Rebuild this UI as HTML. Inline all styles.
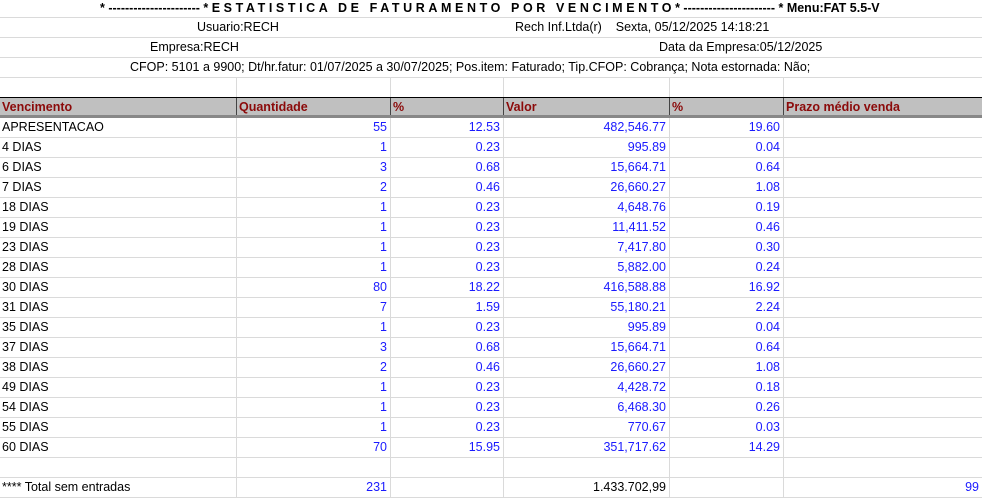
<!DOCTYPE html>
<html><head><meta charset="utf-8"><style>
*{margin:0;padding:0;box-sizing:border-box}
body{width:982px;height:498px;overflow:hidden;background:#fff;font-family:"Liberation Sans",Arial,sans-serif;font-size:12.5px;color:#000;position:relative}
.r{position:absolute;left:0;width:982px;height:20px;border-bottom:1px solid #dadada}
.t{position:absolute;top:0;line-height:19px;white-space:nowrap}
.c{position:absolute;top:0;height:19px;line-height:19px;white-space:nowrap;overflow:hidden;border-right:1px solid #dadada}
.c1{left:0;width:237px;padding-left:2px}
.c2{left:237px;width:154px;text-align:right;padding-right:3px}
.c3{left:391px;width:113px;text-align:right;padding-right:3px}
.c4{left:504px;width:166px;text-align:right;padding-right:3px}
.c5{left:670px;width:114px;text-align:right;padding-right:3px}
.c6{left:784px;width:198px;text-align:right;padding-right:3px;border-right:none}
.b{color:#1a1aff}
.h{background:#c0c0c0;border-top:1px solid #000;border-bottom:3px solid #888;height:21px}
.h .c{color:#8b0a0a;text-align:left;padding-left:2px;padding-right:0;font-weight:bold;height:17px;line-height:18px;border-right:1px solid #444}
.h .c6{border-right:none}
</style></head><body>
<div class="r" style="top:-2px"><div class="t" style="left:100px;top:1px;font-weight:bold">* ---------------------- * <span style="letter-spacing:3.6px">ESTATISTICA DE FATURAMENTO POR VENCIMENTO</span>* ---------------------- * Menu:FAT 5.5-V</div></div>
<div class="r" style="top:18px"><div class="t" style="left:197px">Usuario:RECH</div><div class="t" style="left:515px">Rech Inf.Ltda(r)&nbsp;&nbsp;&nbsp; Sexta, 05/12/2025 14:18:21</div></div>
<div class="r" style="top:38px"><div class="t" style="left:150px">Empresa:RECH</div><div class="t" style="left:659px">Data da Empresa:05/12/2025</div></div>
<div class="r" style="top:58px"><div class="t" style="left:130px">CFOP: 5101 a 9900; Dt/hr.fatur: 01/07/2025 a 30/07/2025; Pos.item: Faturado; Tip.CFOP: Cobrança; Nota estornada: Não;</div></div>
<div class="r" style="top:78px;border-bottom:none;height:19px"><div class="c c1"></div><div class="c c2"></div><div class="c c3"></div><div class="c c4"></div><div class="c c5"></div><div class="c c6"></div></div>
<div class="r h" style="top:97px"><div class="c c1">Vencimento</div><div class="c c2">Quantidade</div><div class="c c3">%</div><div class="c c4">Valor</div><div class="c c5">%</div><div class="c c6">Prazo médio venda</div></div>
<div class="r" style="top:118px"><div class="c c1">APRESENTACAO</div><div class="c c2 b">55</div><div class="c c3 b">12.53</div><div class="c c4 b">482,546.77</div><div class="c c5 b">19.60</div><div class="c c6"></div></div>
<div class="r" style="top:138px"><div class="c c1">4 DIAS</div><div class="c c2 b">1</div><div class="c c3 b">0.23</div><div class="c c4 b">995.89</div><div class="c c5 b">0.04</div><div class="c c6"></div></div>
<div class="r" style="top:158px"><div class="c c1">6 DIAS</div><div class="c c2 b">3</div><div class="c c3 b">0.68</div><div class="c c4 b">15,664.71</div><div class="c c5 b">0.64</div><div class="c c6"></div></div>
<div class="r" style="top:178px"><div class="c c1">7 DIAS</div><div class="c c2 b">2</div><div class="c c3 b">0.46</div><div class="c c4 b">26,660.27</div><div class="c c5 b">1.08</div><div class="c c6"></div></div>
<div class="r" style="top:198px"><div class="c c1">18 DIAS</div><div class="c c2 b">1</div><div class="c c3 b">0.23</div><div class="c c4 b">4,648.76</div><div class="c c5 b">0.19</div><div class="c c6"></div></div>
<div class="r" style="top:218px"><div class="c c1">19 DIAS</div><div class="c c2 b">1</div><div class="c c3 b">0.23</div><div class="c c4 b">11,411.52</div><div class="c c5 b">0.46</div><div class="c c6"></div></div>
<div class="r" style="top:238px"><div class="c c1">23 DIAS</div><div class="c c2 b">1</div><div class="c c3 b">0.23</div><div class="c c4 b">7,417.80</div><div class="c c5 b">0.30</div><div class="c c6"></div></div>
<div class="r" style="top:258px"><div class="c c1">28 DIAS</div><div class="c c2 b">1</div><div class="c c3 b">0.23</div><div class="c c4 b">5,882.00</div><div class="c c5 b">0.24</div><div class="c c6"></div></div>
<div class="r" style="top:278px"><div class="c c1">30 DIAS</div><div class="c c2 b">80</div><div class="c c3 b">18.22</div><div class="c c4 b">416,588.88</div><div class="c c5 b">16.92</div><div class="c c6"></div></div>
<div class="r" style="top:298px"><div class="c c1">31 DIAS</div><div class="c c2 b">7</div><div class="c c3 b">1.59</div><div class="c c4 b">55,180.21</div><div class="c c5 b">2.24</div><div class="c c6"></div></div>
<div class="r" style="top:318px"><div class="c c1">35 DIAS</div><div class="c c2 b">1</div><div class="c c3 b">0.23</div><div class="c c4 b">995.89</div><div class="c c5 b">0.04</div><div class="c c6"></div></div>
<div class="r" style="top:338px"><div class="c c1">37 DIAS</div><div class="c c2 b">3</div><div class="c c3 b">0.68</div><div class="c c4 b">15,664.71</div><div class="c c5 b">0.64</div><div class="c c6"></div></div>
<div class="r" style="top:358px"><div class="c c1">38 DIAS</div><div class="c c2 b">2</div><div class="c c3 b">0.46</div><div class="c c4 b">26,660.27</div><div class="c c5 b">1.08</div><div class="c c6"></div></div>
<div class="r" style="top:378px"><div class="c c1">49 DIAS</div><div class="c c2 b">1</div><div class="c c3 b">0.23</div><div class="c c4 b">4,428.72</div><div class="c c5 b">0.18</div><div class="c c6"></div></div>
<div class="r" style="top:398px"><div class="c c1">54 DIAS</div><div class="c c2 b">1</div><div class="c c3 b">0.23</div><div class="c c4 b">6,468.30</div><div class="c c5 b">0.26</div><div class="c c6"></div></div>
<div class="r" style="top:418px"><div class="c c1">55 DIAS</div><div class="c c2 b">1</div><div class="c c3 b">0.23</div><div class="c c4 b">770.67</div><div class="c c5 b">0.03</div><div class="c c6"></div></div>
<div class="r" style="top:438px"><div class="c c1">60 DIAS</div><div class="c c2 b">70</div><div class="c c3 b">15.95</div><div class="c c4 b">351,717.62</div><div class="c c5 b">14.29</div><div class="c c6"></div></div>
<div class="r" style="top:458px"><div class="c c1"></div><div class="c c2"></div><div class="c c3"></div><div class="c c4"></div><div class="c c5"></div><div class="c c6"></div></div>
<div class="r" style="top:478px"><div class="c c1">**** Total sem entradas</div><div class="c c2 b">231</div><div class="c c3"></div><div class="c c4">1.433.702,99</div><div class="c c5"></div><div class="c c6 b">99</div></div>
</body></html>
